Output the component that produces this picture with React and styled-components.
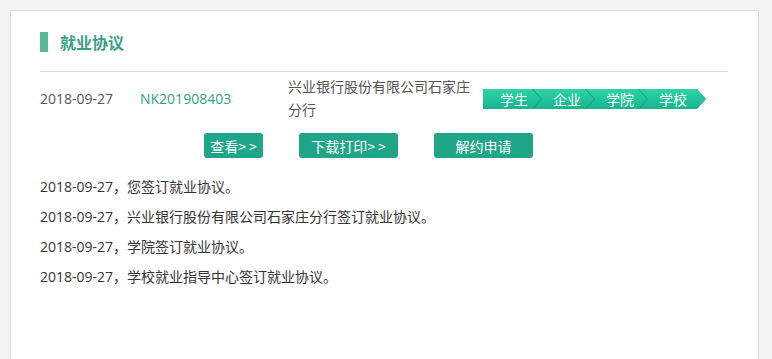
import React from 'react'
import styled, { createGlobalStyle } from 'styled-components'

const GlobalStyle = createGlobalStyle`
  html, body {
    margin: 0;
    padding: 0;
    background: #f3f3f3;
    font-family: "Open Sans", "Noto Sans CJK SC", sans-serif;
  }
`

const Page = styled.div`
  padding: 10px 13px 0 10px;
  height: 359px;
  box-sizing: border-box;
  overflow: hidden;
`

const Card = styled.div`
  background: #fff;
  border: 1px solid #dedede;
  padding: 19px 30px 0 29px;
  height: 400px;
`

const TitleBar = styled.div`
  display: flex;
  align-items: center;
  gap: 12px;
  height: 23px;
  padding-bottom: 18px;
  border-bottom: 1px solid #dcdcdc;
`

const Mark = styled.span`
  width: 8px;
  height: 20px;
  background: #5ab79c;
`

const Title = styled.h2`
  margin: 0;
  font-family: "Noto Sans CJK SC", sans-serif;
  font-size: 16px;
  font-weight: bold;
  color: #3a9e86;
`

const Row = styled.div`
  display: flex;
  align-items: center;
  padding-top: 2px;
  height: 48px;
  font-size: 14px;
  color: #555;
`

const Cell = styled.div`
  width: ${p => p.w}px;
  flex: none;
  color: ${p => (p.green ? '#2fa586' : '#555')};
  line-height: 23px;
`

// ribbon: dark base shows through the 1px gaps between the chevrons
const Steps = styled.div`
  display: flex;
  margin-top: 2px;
  background: #149a7c;
  border-radius: 4px 0 0 4px;
  clip-path: polygon(0 0, calc(100% - 9px) 0, 100% 50%, calc(100% - 9px) 100%, 0 100%);
`

const Step = styled.div`
  width: ${p => p.w}px;
  height: 20px;
  box-sizing: border-box;
  margin-left: ${p => (p.first ? 0 : -8)}px;
  padding-left: ${p => (p.first ? 17 : 20)}px;
  font-family: "Noto Sans CJK SC", sans-serif;
  font-size: 14px;
  line-height: 20px;
  color: #fff;
  background: linear-gradient(180deg, #30d2a8 0%, #1fc29a 55%, #1bb390 100%);
  clip-path: ${p =>
    p.first
      ? 'polygon(0 0, calc(100% - 9px) 0, 100% 50%, calc(100% - 9px) 100%, 0 100%)'
      : 'polygon(0 0, calc(100% - 9px) 0, 100% 50%, calc(100% - 9px) 100%, 0 100%, 9px 50%)'};
`

const Actions = styled.div`
  display: flex;
  gap: 36px;
  padding: 11px 0 0 164px;
`

const Button = styled.button`
  width: ${p => p.w}px;
  height: 25px;
  border: none;
  border-radius: 3px;
  background: #1fa688;
  color: #fff;
  font-family: "Noto Sans CJK SC", sans-serif;
  font-size: 14px;
  padding: 0;
  cursor: pointer;
`

const Log = styled.ul`
  list-style: none;
  margin: 0;
  padding: 14px 0 0;
`

const LogItem = styled.li`
  font-size: 14px;
  color: #333;
  line-height: 30px;
`

const steps = ['学生', '企业', '学院', '学校']
const stepWidths = [58, 61, 61, 67]

const logs = [
  '2018-09-27，您签订就业协议。',
  '2018-09-27，兴业银行股份有限公司石家庄分行签订就业协议。',
  '2018-09-27，学院签订就业协议。',
  '2018-09-27，学校就业指导中心签订就业协议。'
]

const App = () => (
  <Page>
    <GlobalStyle />
    <Card>
      <TitleBar>
        <Mark />
        <Title>就业协议</Title>
      </TitleBar>
      <Row>
        <Cell w={100}>2018-09-27</Cell>
        <Cell w={148} green>NK201908403</Cell>
        <Cell w={195}>兴业银行股份有限公司石家庄分行</Cell>
        <Steps>
          {steps.map((s, i) => (
            <Step key={s} first={i === 0} w={stepWidths[i]}>{s}</Step>
          ))}
        </Steps>
      </Row>
      <Actions>
        <Button w={59}>查看&gt; &gt;</Button>
        <Button w={99}>下载打印&gt; &gt;</Button>
        <Button w={99}>解约申请</Button>
      </Actions>
      <Log>
        {logs.map(l => <LogItem key={l}>{l}</LogItem>)}
      </Log>
    </Card>
  </Page>
)

export default App
